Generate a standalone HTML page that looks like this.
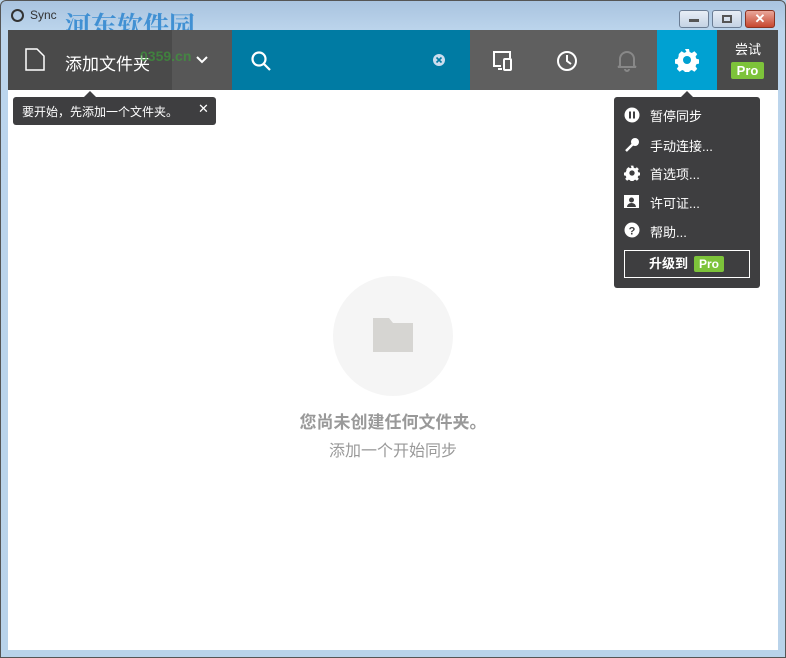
<!DOCTYPE html>
<html><head><meta charset="utf-8"><style>
*{margin:0;padding:0;box-sizing:border-box}
body{width:786px;height:658px;overflow:hidden;background:#b9d3ea;font-family:"Liberation Sans","Noto Sans CJK SC",sans-serif;position:relative}
.frame{position:absolute;left:0;top:0;width:786px;height:658px;border:1px solid #555;border-radius:6px 6px 0 0;background:linear-gradient(#a9c3df,#bcd5ec 30px,#b9d3ea)}
.abs{position:absolute}
.content{left:8px;top:30px;width:770px;height:620px;background:#fff}
.tb{top:30px;height:60px}
.btn{top:10px;height:18px;border:1px solid #6b7d94;border-radius:3px;background:linear-gradient(#e8eef6,#c4d3e4)}
.menu{left:614px;top:97px;width:146px;height:191px;background:#3e3e40;border-radius:3px;color:#fff;font-size:13px}
.mi{position:absolute;left:36px}
.ico{position:absolute;left:10px}
</style></head><body>
<div class="frame"></div>
<div class="abs" style="left:11px;top:9px;width:13px;height:13px;border-radius:50%;border:2px solid #333"></div>
<div class="abs" style="left:30px;top:8px;font-size:12px;color:#333">Sync</div>
<div class="abs" style="left:65px;top:10px;font-size:26px;font-weight:bold;color:#2d86d0;font-family:'Noto Serif CJK SC',serif;opacity:.85;line-height:30px">河东软件园</div>
<div class="abs btn" style="left:679px;width:30px"><div class="abs" style="left:9px;top:8px;width:10px;height:3px;background:#555"></div></div>
<div class="abs btn" style="left:712px;width:30px"><div class="abs" style="left:9px;top:4px;width:10px;height:8px;border:2px solid #555"></div></div>
<div class="abs btn" style="left:745px;width:30px;background:linear-gradient(#e9a79a,#c7472f);border-color:#8a3322;color:#fff;font-size:13px;font-weight:bold;text-align:center;line-height:16px">✕</div>
<div class="abs content"></div>
<div class="abs tb" style="left:8px;width:164px;background:#4a4a4a"></div>
<div class="abs tb" style="left:172px;width:60px;background:#575757"></div>
<div class="abs tb" style="left:232px;width:238px;background:#007ba3"></div>
<div class="abs tb" style="left:470px;width:187px;background:#5f5f5f"></div>
<div class="abs tb" style="left:657px;width:60px;background:#00a1d2"></div>
<div class="abs tb" style="left:717px;width:61px;background:#4a4a4a"></div>
<svg class="abs" style="left:24px;top:48px" width="24" height="24" fill="none" stroke="#fff" stroke-width="1.5"><path d="M2 1h11l7 7v14H2z"/></svg>
<div class="abs" style="left:65px;top:50px;font-size:17px;color:#fff">添加文件夹</div>
<svg class="abs" style="left:195px;top:55px" width="14" height="10" fill="none" stroke="#fff" stroke-width="2"><path d="M2 2l5 5 5-5"/></svg>
<div class="abs" style="top:48px;font-size:14px;color:#3aa537;font-weight:bold;opacity:.6;left:140px">0359.cn</div>
<svg class="abs" style="left:250px;top:50px" width="22" height="22" fill="none" stroke="#fff" stroke-width="2.2"><circle cx="9" cy="9" r="6.5"/><path d="M14 14l6 6"/></svg>
<svg class="abs" style="left:432px;top:53px" width="14" height="14"><circle cx="7" cy="7" r="6" fill="#cde"/><path d="M4.5 4.5l5 5M9.5 4.5l-5 5" stroke="#007ba3" stroke-width="1.6"/></svg>
<svg class="abs" style="left:492px;top:50px" width="24" height="22" fill="none" stroke="#fff" stroke-width="2"><path d="M9 16H2V2h16v6"/><rect x="12" y="9" width="7" height="11" rx="1"/><path d="M6 19h4"/></svg>
<svg class="abs" style="left:555px;top:49px" width="24" height="24" fill="none" stroke="#fff" stroke-width="2"><circle cx="12" cy="12" r="9"/><path d="M12 6v6l4 3"/></svg>
<svg class="abs" style="left:616px;top:48px" width="22" height="24" fill="none" stroke="#888" stroke-width="2"><path d="M4 18V11a7 7 0 0114 0v7l2 1H2zM9 21a2 2 0 004 0"/></svg>
<svg class="abs" style="left:675px;top:48px" width="24" height="24" viewBox="0 0 24 24"><path fill="#fff" d="M10 1h4l.6 3 2.2 1 2.6-1.7 2.8 2.8-1.7 2.6 1 2.2 3 .6v4l-3 .6-1 2.2 1.7 2.6-2.8 2.8-2.6-1.7-2.2 1-.6 3h-4l-.6-3-2.2-1-2.6 1.7-2.8-2.8 1.7-2.6-1-2.2-3-.6v-4l3-.6 1-2.2L3.8 6l2.8-2.8 2.6 1.7 2.2-1z"/><circle cx="12" cy="12" r="4" fill="#00a1d2"/></svg>
<div class="abs" style="left:735px;top:39px;font-size:13px;color:#fff">尝试</div>
<div class="abs" style="left:731px;top:62px;width:33px;height:17px;background:#7dc33a;border-radius:2px;color:#fff;font-size:13px;font-weight:bold;text-align:center;line-height:17px">Pro</div>
<div class="abs" style="left:13px;top:97px;width:203px;height:28px;background:#3e3e40;border-radius:3px"></div>
<div class="abs" style="left:84px;top:91px;width:0;height:0;border:6px solid transparent;border-bottom-color:#3e3e40;border-top:0"></div>
<div class="abs" style="left:22px;top:103px;font-size:12px;color:#fff">要开始，先添加一个文件夹。</div>
<div class="abs" style="left:198px;top:101px;font-size:13px;color:#fff">✕</div>
<div class="abs" style="left:681px;top:91px;width:0;height:0;border:6px solid transparent;border-bottom-color:#3e3e40;border-top:0"></div>
<div class="abs menu">
<svg class="ico" style="top:10px" width="16" height="16"><circle cx="8" cy="8" r="7.5" fill="#fff"/><rect x="5" y="4.5" width="2" height="7" fill="#3e3e40"/><rect x="9" y="4.5" width="2" height="7" fill="#3e3e40"/></svg>
<div class="mi" style="top:9px">暂停同步</div>
<svg class="ico" style="top:40px" width="16" height="16"><circle cx="11" cy="5" r="4" fill="#fff"/><path d="M9 7L2 14" stroke="#fff" stroke-width="2.5"/></svg>
<div class="mi" style="top:39px">手动连接...</div>
<svg class="ico" style="top:68px" width="16" height="16" viewBox="0 0 24 24"><path fill="#fff" d="M10 1h4l.6 3 2.2 1 2.6-1.7 2.8 2.8-1.7 2.6 1 2.2 3 .6v4l-3 .6-1 2.2 1.7 2.6-2.8 2.8-2.6-1.7-2.2 1-.6 3h-4l-.6-3-2.2-1-2.6 1.7-2.8-2.8 1.7-2.6-1-2.2-3-.6v-4l3-.6 1-2.2L3.8 6l2.8-2.8 2.6 1.7 2.2-1z"/><circle cx="12" cy="12" r="4" fill="#3e3e40"/></svg>
<div class="mi" style="top:67px">首选项...</div>
<svg class="ico" style="top:98px" width="16" height="14"><rect width="15" height="13" fill="#fff"/><circle cx="7.5" cy="5" r="2.5" fill="#3e3e40"/><path d="M3 12a4.5 4 0 019 0z" fill="#3e3e40"/></svg>
<div class="mi" style="top:96px">许可证...</div>
<svg class="ico" style="top:125px" width="16" height="16"><circle cx="8" cy="8" r="7.5" fill="#fff"/><text x="8" y="12.5" font-size="11" font-weight="bold" text-anchor="middle" fill="#3e3e40" font-family="Liberation Sans">?</text></svg>
<div class="mi" style="top:125px">帮助...</div>
<div class="abs" style="left:10px;top:153px;width:126px;height:28px;border:1px solid #fff"></div>
<div class="abs" style="left:35px;top:158px;font-weight:bold;line-height:18px">升级到</div>
<div class="abs" style="left:80px;top:159px;width:30px;height:16px;background:#7dc33a;border-radius:2px;font-size:12px;font-weight:bold;text-align:center;line-height:16px">Pro</div>
</div>
<div class="abs" style="left:333px;top:276px;width:120px;height:120px;border-radius:50%;background:#f5f5f5"></div>
<svg class="abs" style="left:372px;top:317px" width="42" height="36"><path d="M1 1h16l4 5h20v29H1z" fill="#d6d5d2"/></svg>
<div class="abs" style="left:0;width:786px;top:408px;text-align:center;font-size:17px;font-weight:bold;color:#999">您尚未创建任何文件夹。</div>
<div class="abs" style="left:0;width:786px;top:437px;text-align:center;font-size:16px;color:#999">添加一个开始同步</div>
</body></html>
